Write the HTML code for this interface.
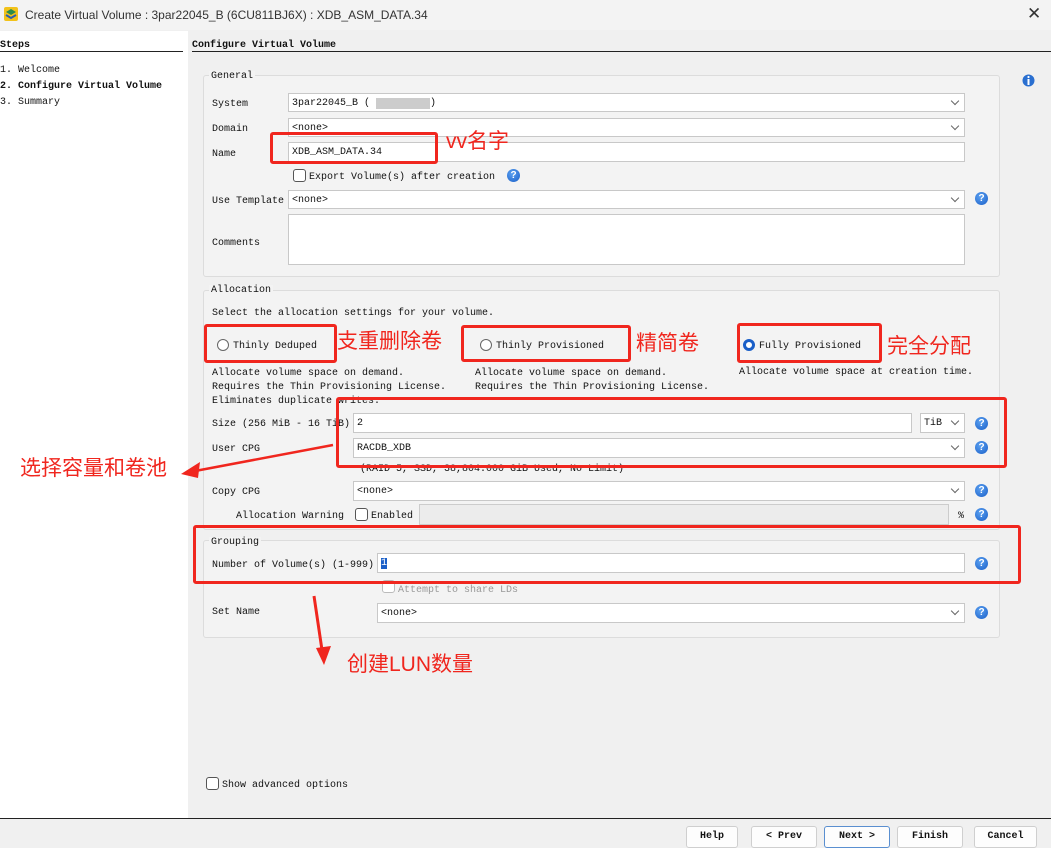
<!DOCTYPE html>
<html><head><meta charset="utf-8"><style>
*{margin:0;padding:0;box-sizing:border-box}
body{width:1051px;height:845px;overflow:hidden;background:#f0f0f0;position:relative;font-family:"Liberation Mono",monospace;font-size:10px;color:#111}
.a{position:absolute;white-space:nowrap}
.t{position:absolute;white-space:nowrap;line-height:12px;margin-top:2px}
.in{position:absolute;background:#fff;border:1px solid #c8c8c8;padding-left:3px;line-height:19px;font-size:10px}
.cb{position:absolute;background:#fff;border:1px solid #c8c8c8;padding-left:3px;line-height:19px}
.cb:after{content:"";position:absolute;right:6px;top:4px;width:5px;height:5px;border-right:1px solid #666;border-bottom:1px solid #666;transform:rotate(45deg)}
.grp{position:absolute;border:1px solid #dcdcdc;border-radius:3px;background:#f3f3f3}
.h{position:absolute;width:13px;height:13px;border-radius:50%;background:radial-gradient(circle at 40% 35%,#5aa0f0,#1a5fc8);color:#fff;font:bold 10px "Liberation Sans",sans-serif;text-align:center;line-height:13px}
.chk{position:absolute;width:13px;height:13px;border:1px solid #555;border-radius:3px;background:#fff}
.rad{position:absolute;width:12px;height:12px;border:1px solid #666;border-radius:50%;background:#fff}
.red{position:absolute;border:3px solid #f0261e;border-radius:3px}
.rt{position:absolute;color:#f0261e;font-family:"Liberation Sans","Noto Sans CJK SC",sans-serif;font-size:21px;white-space:nowrap;line-height:24px}
.btn{position:absolute;top:826px;height:22px;background:#fdfdfd;border:1px solid #cfcfcf;border-radius:3px;text-align:center;line-height:19px;font-weight:bold}
b{font-weight:bold}
</style></head><body>
<div class="a" style="left:0;top:0;width:1051px;height:30px;background:#f3f3f3"></div>
<svg class="a" style="left:3px;top:6px" width="16" height="16" viewBox="0 0 16 16"><rect x="1" y="1" width="14" height="14" rx="2" fill="#f2c21a"/><path d="M3 6 L8 3 L13 6 L8 9Z" fill="#2a8c4a"/><path d="M3 9 L8 12 L13 9" stroke="#2a5fb0" stroke-width="2" fill="none"/></svg>
<div class="a" style="left:25px;top:8px;font:12px 'Liberation Sans',sans-serif;color:#333">Create Virtual Volume : 3par22045_B (6CU811BJ6X) : XDB_ASM_DATA.34</div>
<div class="a" style="left:1027px;top:4px;font:17px 'Liberation Sans',sans-serif;color:#333">✕</div>

<div class="a" style="left:0;top:31px;width:188px;height:787px;background:#fff"></div>
<div class="t" style="left:0;top:38px"><b>Steps</b></div>
<div class="a" style="left:0;top:51px;width:183px;height:1px;background:#222"></div>
<div class="t" style="left:192px;top:38px"><b>Configure Virtual Volume</b></div>
<div class="a" style="left:192px;top:51px;width:859px;height:1px;background:#222"></div>
<div class="t" style="left:0;top:63px">1. Welcome</div>
<div class="t" style="left:0;top:79px"><b>2. Configure Virtual Volume</b></div>
<div class="t" style="left:0;top:95px">3. Summary</div>

<div class="grp" style="left:203px;top:75px;width:797px;height:202px"></div>
<div class="t" style="left:209px;top:69px;background:#f3f3f3;padding:0 2px">General</div>
<div class="t" style="left:212px;top:97px">System</div>
<div class="cb" style="left:288px;top:93px;width:677px;height:19px">3par22045_B ( <span style="background:#ccc;color:#ccc">XXXXXXXXX</span>)</div>
<div class="t" style="left:212px;top:122px">Domain</div>
<div class="cb" style="left:288px;top:118px;width:677px;height:19px">&lt;none&gt;</div>
<div class="t" style="left:212px;top:147px">Name</div>
<div class="in" style="left:288px;top:142px;width:677px;height:20px">XDB_ASM_DATA.34</div>
<div class="chk" style="left:293px;top:169px"></div>
<div class="t" style="left:309px;top:170px">Export Volume(s) after creation</div>
<div class="h" style="left:507px;top:169px">?</div>
<div class="t" style="left:212px;top:194px">Use Template</div>
<div class="cb" style="left:288px;top:190px;width:677px;height:19px">&lt;none&gt;</div>
<div class="h" style="left:975px;top:192px">?</div>
<div class="t" style="left:212px;top:236px">Comments</div>
<div class="in" style="left:288px;top:214px;width:677px;height:51px"></div>
<svg class="a" style="left:1022px;top:74px" width="13" height="13"><circle cx="6.5" cy="6.5" r="6" fill="#2a6fd0"/><rect x="5.5" y="5" width="2" height="6" fill="#fff"/><circle cx="6.5" cy="3" r="1.1" fill="#fff"/></svg>

<div class="grp" style="left:203px;top:290px;width:797px;height:240px"></div>
<div class="t" style="left:209px;top:283px;background:#f3f3f3;padding:0 2px">Allocation</div>
<div class="t" style="left:212px;top:306px">Select the allocation settings for your volume.</div>
<div class="rad" style="left:217px;top:339px"></div>
<div class="t" style="left:233px;top:339px">Thinly Deduped</div>
<div class="rad" style="left:480px;top:339px"></div>
<div class="t" style="left:496px;top:339px">Thinly Provisioned</div>
<div class="rad" style="left:743px;top:339px;border:3px solid #1a5fc8"></div>
<div class="t" style="left:759px;top:339px">Fully Provisioned</div>
<div class="t" style="left:212px;top:365px;line-height:14px">Allocate volume space on demand.<br>Requires the Thin Provisioning License.<br>Eliminates duplicate writes.</div>
<div class="t" style="left:475px;top:365px;line-height:14px">Allocate volume space on demand.<br>Requires the Thin Provisioning License.</div>
<div class="t" style="left:739px;top:365px">Allocate volume space at creation time.</div>
<div class="t" style="left:212px;top:417px">Size (256 MiB - 16 TiB)</div>
<div class="in" style="left:353px;top:413px;width:559px;height:20px">2</div>
<div class="cb" style="left:920px;top:413px;width:45px;height:20px">TiB</div>
<div class="h" style="left:975px;top:417px">?</div>
<div class="t" style="left:212px;top:442px">User CPG</div>
<div class="cb" style="left:353px;top:438px;width:612px;height:20px">RACDB_XDB</div>
<div class="h" style="left:975px;top:441px">?</div>
<div class="t" style="left:360px;top:462px">(RAID 5, SSD, 38,804.000 GiB Used, No Limit)</div>
<div class="t" style="left:212px;top:485px">Copy CPG</div>
<div class="cb" style="left:353px;top:481px;width:612px;height:20px">&lt;none&gt;</div>
<div class="h" style="left:975px;top:484px">?</div>
<div class="t" style="left:236px;top:509px">Allocation Warning</div>
<div class="chk" style="left:355px;top:508px"></div>
<div class="t" style="left:371px;top:509px">Enabled</div>
<div class="a" style="left:419px;top:504px;width:530px;height:21px;border:1px solid #ccc;background:#ececec"></div>
<div class="t" style="left:958px;top:509px">%</div>
<div class="h" style="left:975px;top:508px">?</div>

<div class="grp" style="left:203px;top:540px;width:797px;height:98px"></div>
<div class="t" style="left:209px;top:535px;background:#f3f3f3;padding:0 2px">Grouping</div>
<div class="t" style="left:212px;top:558px">Number of Volume(s) (1-999)</div>
<div class="in" style="left:377px;top:553px;width:588px;height:20px"><span style="background:#1a5fc8;color:#fff">1</span></div>
<div class="h" style="left:975px;top:557px">?</div>
<div class="chk" style="left:382px;top:580px;border-color:#bbb"></div>
<div class="t" style="left:398px;top:583px;color:#999">Attempt to share LDs</div>
<div class="t" style="left:212px;top:605px">Set Name</div>
<div class="cb" style="left:377px;top:603px;width:588px;height:20px">&lt;none&gt;</div>
<div class="h" style="left:975px;top:606px">?</div>

<div class="chk" style="left:206px;top:777px"></div>
<div class="t" style="left:222px;top:778px">Show advanced options</div>
<div class="a" style="left:0;top:818px;width:1051px;height:1px;background:#222"></div>
<div class="btn" style="left:686px;width:52px">Help</div>
<div class="btn" style="left:751px;width:66px">&lt; Prev</div>
<div class="btn" style="left:824px;width:66px;border-color:#5a8fd0">Next &gt;</div>
<div class="btn" style="left:897px;width:66px">Finish</div>
<div class="btn" style="left:974px;width:63px">Cancel</div>

<div class="red" style="left:270px;top:132px;width:168px;height:32px"></div>
<div class="rt" style="left:446px;top:130px">vv名字</div>
<div class="red" style="left:204px;top:324px;width:133px;height:39px"></div>
<div class="rt" style="left:337px;top:330px">支重删除卷</div>
<div class="red" style="left:461px;top:325px;width:170px;height:37px"></div>
<div class="rt" style="left:636px;top:332px">精简卷</div>
<div class="red" style="left:737px;top:323px;width:145px;height:40px"></div>
<div class="rt" style="left:887px;top:335px">完全分配</div>
<div class="red" style="left:336px;top:397px;width:671px;height:71px"></div>
<div class="rt" style="left:20px;top:457px">选择容量和卷池</div>
<div class="red" style="left:193px;top:525px;width:828px;height:59px"></div>
<div class="rt" style="left:347px;top:653px">创建LUN数量</div>
<svg class="a" style="left:0;top:0" width="1051" height="845"><path d="M333 445 L195 471" stroke="#f0261e" stroke-width="2.5"/><path d="M181 474 L200 462 L198 478Z" fill="#f0261e"/><path d="M314 596 L322 650" stroke="#f0261e" stroke-width="3"/><path d="M316 648 L324 665 L331 646Z" fill="#f0261e"/></svg>
</body></html>
